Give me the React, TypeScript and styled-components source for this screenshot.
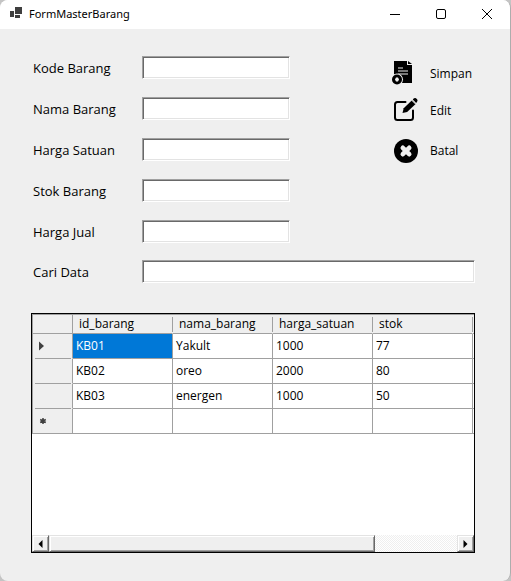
import React from "react";
import styled, { createGlobalStyle, css } from "styled-components";

const GlobalStyle = createGlobalStyle`
  * { box-sizing: border-box; }
  body {
    margin: 0;
    background: #c4c4c4;
    font-family: "Open Sans", "Noto Sans", sans-serif;
    font-size: 12px;
    color: #000;
  }
`;

const Window = styled.div`
  min-height: 100vh;
  display: flex;
  flex-direction: column;
  background: #efefef;
  border-right: 1px solid #adadad;
  border-radius: 8px;
  overflow: hidden;
`;

const TitleBar = styled.header`
  display: flex;
  align-items: center;
  height: 29px;
  flex: none;
  padding: 0 0 2px 9px;
  background: #fff;
`;

const Title = styled.h1`
  flex: 1;
  margin: 0 0 0 6px;
  font-family: "Noto Sans", sans-serif;
  font-size: 11px;
  line-height: 16px;
  font-weight: 400;
`;

const CaptionButton = styled.button`
  display: grid;
  place-items: center;
  width: 46px;
  height: 26px;
  padding: 0;
  border: 0;
  background: transparent;
`;

const Content = styled.main`
  flex: 1;
  display: flex;
  flex-direction: column;
  padding: 27px 35px 28px 31px;
`;

const Top = styled.div`
  display: flex;
  justify-content: space-between;
`;

const Fields = styled.div`
  display: flex;
  flex-direction: column;
  gap: 18px;
  margin-bottom: 17px;
`;

const Field = styled.div<{ $wide?: boolean }>`
  display: grid;
  grid-template-columns: 109px ${(p) => (p.$wide ? "1fr" : "148px")};
  align-items: center;
  padding-left: 2px;
  margin-right: ${(p) => (p.$wide ? "0" : "16px")};
`;

const Label = styled.label`
  font-size: 13px;
  line-height: 20px;
`;

const TextBox = styled.input`
  width: 100%;
  height: 23px;
  padding: 2px 4px;
  border: 1px solid;
  border-color: #a0a0a0 #fff #fff #a0a0a0;
  border-radius: 0;
  background: #fff;
  box-shadow: inset 1px 1px 0 #696969, inset -1px -1px 0 #e3e3e3;
  font: inherit;
  outline: none;
`;

const Actions = styled.div`
  display: grid;
  grid-template-rows: 34px 40px 40px;
  align-content: start;
  width: 84px;
`;

const ActionButton = styled.button`
  display: flex;
  align-items: center;
  gap: 11px;
  padding: 0 0 0 1px;
  border: 0;
  background: transparent;
  font: inherit;
  color: inherit;
  text-align: left;
  svg { flex: none; }
`;

const GridView = styled.section`
  display: flex;
  flex-direction: column;
  flex: 1;
  margin-top: 30px;
  border: 1px solid #000;
  background: #fff;
`;

const GridBody = styled.div`
  flex: 1;
  overflow: hidden;
  width: 100%;
  display: grid;
  align-content: start;
`;

const Table = styled.table`
  table-layout: fixed;
  width: 541px;
  border-collapse: separate;
  border-spacing: 0;
  border-top: 1px solid #a0a0a0;
  border-left: 1px solid #a0a0a0;
`;

const line = css`
  border-right: 1px solid #a0a0a0;
  border-bottom: 1px solid #a0a0a0;
`;

const HeadCell = styled.th<{ $corner?: boolean }>`
  ${line}
  width: ${(p) => (p.$corner ? "40px" : "100px")};
  height: 19px;
  padding: 0 0 0 6px;
  border-right-color: ${(p) => (p.$corner ? "#a0a0a0" : "transparent")};
  background: ${(p) =>
    p.$corner
      ? "#efefef"
      : "linear-gradient(#a0a0a0, #a0a0a0) right 2px / 1px 15px no-repeat border-box, #efefef"};
  font-weight: 400;
  font-size: 12px;
  line-height: 16px;
  text-align: left;
`;

const RowHead = styled.th<{ $last?: boolean }>`
  ${line}
  border-bottom-color: ${(p) => (p.$last ? "#a0a0a0" : "transparent")};
  background: linear-gradient(#a0a0a0, #a0a0a0) 2px bottom / 36px 1px no-repeat border-box, #efefef;
  padding: 0 0 0 4px;
  text-align: left;
  svg { display: block; }
`;

const Cell = styled.td<{ $selected?: boolean }>`
  ${line}
  height: 25px;
  padding: 0 0 0 3px;
  line-height: 16px;
  background: ${(p) => (p.$selected ? "#0078d7" : "#fff")};
  color: ${(p) => (p.$selected ? "#fff" : "#000")};
`;

const ScrollBar = styled.div`
  display: flex;
  height: 17px;
  flex: none;
  background: repeating-conic-gradient(#efefef 0% 25%, #fff 0% 50%) 0 0 / 2px 2px;
`;

const raised = css`
  border: 1px solid;
  border-color: #e3e3e3 #696969 #696969 #e3e3e3;
  box-shadow: inset 1px 1px 0 #fff, inset -1px -1px 0 #a0a0a0;
  background: #efefef;
`;

const ScrollButton = styled.button`
  ${raised}
  display: grid;
  place-items: center;
  width: 17px;
  height: 17px;
  padding: 0;
  border-radius: 0;
`;

const Track = styled.div`
  flex: 1;
`;

const Thumb = styled.div`
  ${raised}
  width: 80%;
  height: 17px;
`;

const AppIcon = () => (
  <svg width="14" height="14" viewBox="0 0 14 14" fill="#3f3f3f" shapeRendering="crispEdges">
    <path d="M1 4h4v6H1zM6 0h7v7H6zM6 8h5v3H6z" />
  </svg>
);

const SaveIcon = () => (
  <svg width="27" height="26" viewBox="0 0 27 26">
    <path d="M2 1h13v4h5v18H2z" fill="#000" />
    <path d="M16 1l4 3h-4z" fill="#000" />
    <path d="M6 8h5M6 11h10M6 14h10" stroke="#efefef" strokeWidth="1.200" />
    <circle cx="5" cy="19.500" r="6" fill="#efefef" />
    <circle cx="5" cy="19.500" r="5" fill="#000" />
    <path d="M5 17.600v3.800M3.100 19.500h3.800" stroke="#efefef" strokeWidth="2.200" />
  </svg>
);

const EditIcon = () => (
  <svg width="27" height="26" viewBox="0 0 27 26" fill="none">
    <path d="M13.500 5H5.500Q3 5 3 7.500v13Q3 23 5.500 23h13q2.500 0 2.500-2.500V13.500" stroke="#000" strokeWidth="2" strokeLinecap="round" />
    <path d="M10.500 16l1.200-4.700 8.300-8 3.600 3.600-8.500 8z" fill="#000" />
    <path d="M20.800 2.500q1.400-1.800 3.200-1.300 1.800 1 1.500 2.600-.2 1-1.300 2.100z" fill="#000" />
    <path d="M19.600 3.200l3.700 3.700" stroke="#efefef" strokeWidth=".8" />
  </svg>
);

const CancelIcon = () => (
  <svg width="27" height="26" viewBox="0 0 27 26">
    <circle cx="14" cy="14" r="12" fill="#000" />
    <path d="M10.800 10.800l6.400 6.400M17.200 10.800l-6.400 6.400" stroke="#efefef" strokeWidth="4.600" strokeLinecap="round" />
  </svg>
);

const fields = [
  { id: "kode", label: "Kode Barang" },
  { id: "nama", label: "Nama Barang" },
  { id: "satuan", label: "Harga Satuan" },
  { id: "stok", label: "Stok Barang" },
  { id: "jual", label: "Harga Jual" },
];

const columns = ["id_barang", "nama_barang", "harga_satuan", "stok"];

const rows = [
  ["KB01", "Yakult", "1000", "77"],
  ["KB02", "oreo", "2000", "80"],
  ["KB03", "energen", "1000", "50"],
  ["", "", "", ""],
];

const RowMarker = ({ index }: { index: number }) => (
  <svg width="10" height="10" viewBox="0 0 10 10">
    {index === 0 && <path d="M2 0.500l5 4.500-5 4.500z" fill="#404040" />}
    {index === 3 && (
      <path d="M6 2v6M3.200 3.500l5.600 3M8.800 3.500l-5.600 3" stroke="#404040" strokeWidth="1.500" />
    )}
  </svg>
);

export default function App() {
  return (
    <>
      <GlobalStyle />
      <Window>
        <TitleBar>
          <AppIcon />
          <Title>FormMasterBarang</Title>
          <CaptionButton aria-label="Minimize">
            <svg width="10" height="10" viewBox="0 0 10 10"><path d="M0 5.500h10" stroke="#000" /></svg>
          </CaptionButton>
          <CaptionButton aria-label="Maximize">
            <svg width="10" height="10" viewBox="0 0 10 10"><rect x=".5" y=".5" width="9" height="9" rx="1.500" fill="none" stroke="#000" /></svg>
          </CaptionButton>
          <CaptionButton aria-label="Close">
            <svg width="10" height="10" viewBox="0 0 10 10"><path d="M0 0l10 10M10 0L0 10" stroke="#000" /></svg>
          </CaptionButton>
        </TitleBar>
        <Content>
          <Top>
            <Fields>
              {fields.map((f) => (
                <Field key={f.id}>
                  <Label htmlFor={f.id}>{f.label}</Label>
                  <TextBox id={f.id} type="text" />
                </Field>
              ))}
            </Fields>
            <Actions>
              <ActionButton><SaveIcon />Simpan</ActionButton>
              <ActionButton><EditIcon />Edit</ActionButton>
              <ActionButton><CancelIcon />Batal</ActionButton>
            </Actions>
          </Top>
          <Field $wide>
            <Label htmlFor="cari">Cari Data</Label>
            <TextBox id="cari" type="text" />
          </Field>
          <GridView>
            <GridBody>
              <Table>
                <thead>
                  <tr>
                    <HeadCell $corner />
                    {columns.map((c) => <HeadCell key={c} scope="col">{c}</HeadCell>)}
                    <HeadCell />
                  </tr>
                </thead>
                <tbody>
                  {rows.map((row, r) => (
                    <tr key={r}>
                      <RowHead scope="row" $last={r === rows.length - 1}><RowMarker index={r} /></RowHead>
                      {row.map((value, c) => (
                        <Cell key={c} $selected={r === 0 && c === 0}>{value}</Cell>
                      ))}
                      <Cell />
                    </tr>
                  ))}
                </tbody>
              </Table>
            </GridBody>
            <ScrollBar>
              <ScrollButton aria-label="Scroll left">
                <svg width="5" height="8" viewBox="0 0 5 8"><path d="M4.500 0v8L.5 4z" /></svg>
              </ScrollButton>
              <Track><Thumb /></Track>
              <ScrollButton aria-label="Scroll right">
                <svg width="5" height="8" viewBox="0 0 5 8"><path d="M.5 0v8l4-4z" /></svg>
              </ScrollButton>
            </ScrollBar>
          </GridView>
        </Content>
      </Window>
    </>
  );
}
